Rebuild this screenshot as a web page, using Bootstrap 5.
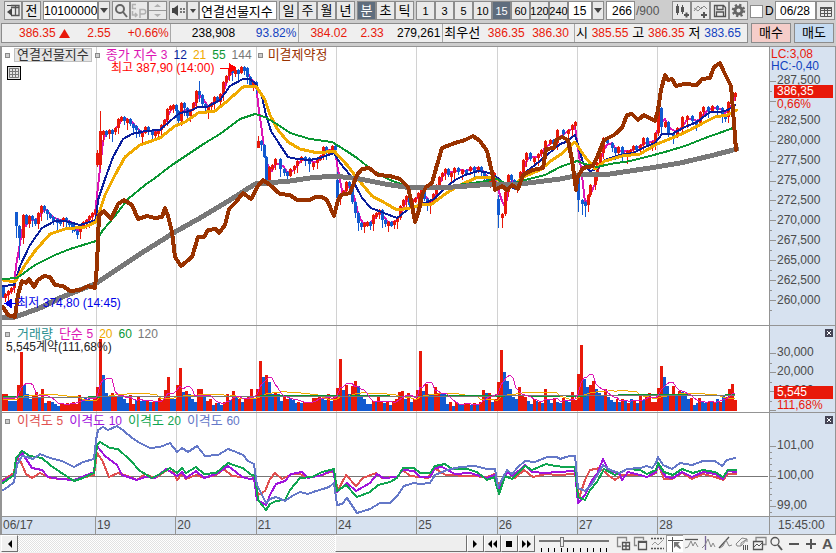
<!DOCTYPE html>
<html lang="ko">
<head>
<meta charset="utf-8">
<meta name="viewport" content="width=device-width, initial-scale=1">
<title>연결선물지수 차트</title>
<link href="https://cdn.jsdelivr.net/npm/bootstrap@5.3.0/dist/css/bootstrap.min.css" rel="stylesheet">
<style>
body{background:#cdcdcd;color:#000;font-family:"Liberation Sans","Noto Sans CJK KR",sans-serif;font-size:12px;line-height:16px}
button,input,select{font:inherit;color:inherit;border-radius:0;margin:0}
/* toolbar */
.tools{height:22px;padding:1px 1px 1px 4px}
.tools>*{height:19px}
.tb{background:#e9e9e9;border:1px solid #8c8c8c;padding:0;width:19px;height:19px;display:flex;align-items:center;justify-content:center;flex:none;white-space:nowrap}
.tb.on{background:#5f6d7d;color:#fff}
.tb.slim{width:12px}
.tb.mid{width:18px}
.tb:disabled{color:#b5b5b5}
.sp{margin-right:2px}
.fld{background:#fff;border:1px solid #8c8c8c;padding:0 2px;height:19px;min-width:0;flex:none}
.w-code{width:55px;padding:0}.w-num{width:24px;padding:0 4px}.w-cnt{width:29px;text-align:right}.w-date{width:41px;padding:0 4px}
.w-name{flex:1 1 77px;font-size:13px;padding:0 1px}
.mins{font-size:11px}
.total{width:37px;padding:2px 0 0 1px;color:#555;flex:none}
.ko{font-size:13px}
.tools .tick-box{appearance:none;width:13px;height:13px;background:#fff;border:1px solid #8c8c8c;align-self:center;flex:none}
.dlab{width:12px;padding:2px 0 0 2px;flex:none}
/* quote line */
.quote{padding:1px 2px 3px 1px;gap:3px}
.cells{border:1px solid #8c8c8c;background:#efefef;height:20px}
.cells>div{display:flex;justify-content:space-between;align-items:center;border-right:1px solid #a8a8a8;white-space:nowrap}
.cells>div:last-child{border-right:0}
.c1{flex:166 1 0;padding:0 1px 0 17px}.c2{flex:116 1 0;padding:0 2px 0 21px}.c3{flex:144 1 0;padding:0 2px 0 11px}.c4{flex:138 1 0;padding:0 5px 0 1px}.c5{flex:183 1 0;padding:0 6px 0 1px}
.up{color:#e8190a}.dn{color:#1242c0}
.deal{width:40px;height:20px;padding:0;border:1px solid #8c8c8c;font-size:13px;line-height:16px}
.buy{background:#f5cdc9}.sell{background:#c6dcf2}
/* chart frame */
.frame{display:grid;grid-template-columns:minmax(0,1fr) 66px;grid-template-rows:minmax(0,279fr) minmax(0,87fr) minmax(0,104fr) 17px;border:1px solid #949494;border-left-width:2px;background:#fff;min-height:0}
.pane{position:relative;border-bottom:1px solid #949494;overflow:hidden;min-height:0}
.pane>svg{position:absolute;inset:0;width:100%;height:100%}
.scale{position:relative;background:#d7e2f0;border-left:1px solid #949494;border-bottom:1px solid #949494;color:#4a4a4a;overflow:hidden;min-height:0}
.scale>svg{position:absolute;left:0;top:0;width:8px;height:100%}
.ladder{display:flex;flex-direction:column;justify-content:space-between;height:100%;padding-left:7px}
.lad-a{padding-top:25px;padding-bottom:17px}.lad-b{padding-top:18px;padding-bottom:14px}.lad-c{padding-top:24px;padding-bottom:3px}
.keys{position:absolute;left:3px;top:1px;display:flex;align-items:center;gap:6px;white-space:nowrap;font-size:13px;line-height:14px}
.keys i{width:5px;height:5px;border:1px solid #8a8a8a;background:#ccc}
.keys i:first-child{margin-right:1px}
.keys b{font-weight:400;font-size:12px}
.keys i+.br{margin-left:-1px}
.chip{border:1px solid #c0c0c0;background:#e6e6e6;padding:0 2px;margin:0 -3px;color:#333;line-height:12px}
.note{position:absolute;white-space:nowrap;line-height:14px}
.n-hi{left:14.2%;top:5%;color:#f00}.n-lo{left:2%;top:89.5%;color:#0000e8}
.n-vol{left:4px;top:14px;color:#222}
.lc{position:absolute;left:1px;top:1px;line-height:12px}
.tag{position:absolute;left:4px;right:2px;background:#e8190a;color:#fff;padding-left:3px;line-height:13px}
.sub{position:absolute;left:4px;right:2px;color:#e8190a;padding-left:3px;line-height:12px}
.t1{top:38px}.s1{top:51px}.t2{top:60px}.s2{top:73px}
.shut{position:absolute;right:2px;top:3px;width:8px;height:8px;padding:0;border:0;background:#445;color:#fff;display:flex}
.gridbtn{position:absolute;left:5px;top:19px;width:14px;height:14px;border:1px solid #000;background:#e2e2e2;padding:1px;display:flex}
.days{background:#d7e2f0;color:#4a4a4a;display:flex;line-height:16px}
.days span{border-left:1px solid #949494;padding-left:1px;flex:80 1 0;min-width:0}
.days span:first-child{border:0;flex-grow:94}.days span:last-child{flex-grow:112}
.clock{background:#d7e2f0;color:#4a4a4a;border-left:1px solid #949494;padding-left:8px;line-height:16px}
.mg{color:#dc14b4}.nv{color:#0a1e9c}.gd{color:#f0aa00}.gr{color:#0a9632}.gy{color:#777}.br{color:#993200}.tl{color:#2a9090}
.rs{color:#e05050}.pu{color:#a014dc}.gn{color:#10a550}.sl{color:#6478c8}
/* bottom strip */
.strip{background:#f1f1f1;height:18px;padding-left:1px}
.sb{width:17px;height:17px;flex:none;padding:0;background:#f0f0f0;border:1px solid;border-color:#fff #707070 #707070 #fff;display:flex;align-items:center;justify-content:center}
.rail{flex:448 1 0;height:17px;background:repeating-conic-gradient(#e2e2e2 0 25%,#fff 0 50%) 0 0/2px 2px;display:flex;justify-content:flex-end}
.thumb{width:29.4%;background:#eee;border:1px solid;border-color:#fff #707070 #707070 #fff}
.zoomer{flex:70 1 0;height:18px;min-width:0;padding:0 3px 0 4px;display:flex;flex-direction:column}
.zoomer input{appearance:none;width:100%;height:13px;background:linear-gradient(#777,#777) 0 5px/100% 2px no-repeat}
.zoomer input::-webkit-slider-thumb{appearance:none;width:4px;height:10px;background:#eee;border:1px solid #777}
.zoomer svg{width:100%;height:4px}
.ib{width:17px;height:17px;flex:none;padding:0;border:0;background:none;display:flex;align-items:center;justify-content:center}
.ib.on{background:#fff;border:1px solid #999;border-right:0;border-bottom:0}
.aa{font-weight:bold;font-size:15px;color:#555}
.ibs{padding:0 0 0 3px}
svg{display:block;flex:none}
.ln polyline{fill:none;stroke-linejoin:round;stroke-linecap:round}
.ic{fill:none;stroke:#555;stroke-width:1.3}
</style>
<script src="https://cdn.jsdelivr.net/npm/bootstrap@5.3.0/dist/js/bootstrap.bundle.min.js"></script>
</head>
<body class="vh-100 d-flex flex-column overflow-hidden">

<header class="tools d-flex align-items-start">
  <button class="tb mid" aria-label="패널"><svg class="ic" width="15" height="15"><path d="M5 2.500h8v10H5M5 4.500h8M9.500 2v10"/><path d="M6 5v8L1 9z" fill="#444" stroke="none"/><path d="M1 2h4v1H1z" fill="#444" stroke="none"/></svg></button>
  <button class="tb ko sp">전</button>
  <input class="fld w-code" aria-label="종목코드" value="10100000">
  <button class="tb slim sp" aria-label="코드 목록"><svg width="8" height="5"><path d="M0 0h8L4 5z" fill="#444"/></svg></button>
  <button class="tb mid" aria-label="검색"><svg width="14" height="14" fill="none" stroke="#666" stroke-width="2"><circle cx="6" cy="5" r="4"/><path d="M9 8l4 5"/></svg></button>
  <button class="tb mid" disabled aria-label="CP"><svg width="16" height="16" fill="none" stroke="#b0b0b0" stroke-width="1.500"><path d="M5 1.500H1.500v4H5M1.500 8v4H5M4 10l2 2-2 2M9 15V6.500h3.500a2 2 0 0 1 0 4.500H9"/></svg></button>
  <button class="tb sp" disabled aria-label="증감"><svg width="17" height="17"><path d="M0 8h17v1H0z" fill="#999"/><path d="M5 5h7L8.500 2zM5 12h7l-3.500 3z" fill="#b0b0b0"/></svg></button>
  <button class="tb mid" aria-label="소리"><svg width="15" height="13"><path d="M1 4h2l4-3v11L3 9H1z" fill="#444"/><path d="M9 4h2v2H9zM12 4h2v2h-2zM9 7h2v2H9zM12 7h2v2h-2z" fill="#777"/></svg></button>
  <button class="tb slim" aria-label="소리 목록"><svg width="6" height="4"><path d="M0 0h6L3 4z" fill="#444"/></svg></button>
  <input class="fld w-name sp" aria-label="종목명" value="연결선물지수">
  <div class="d-flex ko"><button class="tb">일</button><button class="tb">주</button><button class="tb">월</button><button class="tb sp">년</button><button class="tb on">분</button><button class="tb">초</button><button class="tb sp">틱</button></div>
  <div class="d-flex mins"><button class="tb">1</button><button class="tb">3</button><button class="tb">5</button><button class="tb">10</button><button class="tb on">15</button><button class="tb">60</button><button class="tb">120</button><button class="tb">240</button></div>
  <input class="fld w-num" aria-label="분 간격" value="15">
  <button class="tb slim sp" aria-label="간격 목록"><svg width="8" height="5"><path d="M0 0h8L4 5z" fill="#444"/></svg></button>
  <input class="fld w-cnt" aria-label="봉 수" value="266"><span class="total">/900</span>
  <button class="tb" aria-label="지표 추가"><svg width="16" height="16"><path d="M2 3h3v7H2zM3 1h1v11H3zM7 4h3v5H7zM8 2h1v9H8zM10 11h5v2h-5zM11.500 9.500h2v5h-2z" fill="#555"/></svg></button>
  <button class="tb" aria-label="선 추가"><svg width="16" height="16"><path d="M1 8l4-5 3 3 3-3 3 3M1 5l4 3 4-4" fill="none" stroke="#888"/><path d="M8 11h6v2H8zM10 9h2v6h-2z" fill="#555"/></svg></button>
  <button class="tb" aria-label="저장"><svg class="ic" width="16" height="16"><path d="M2.500 2.500h9l2 2v9h-11zM5 2.500v4h6v-4M4.500 13V9h7v4"/></svg></button>
  <button class="tb sp" aria-label="설정"><svg width="15" height="15" fill="none" stroke="#666"><circle cx="7.500" cy="7.500" r="3.500" stroke-width="3"/><circle cx="7.500" cy="7.500" r="5.500" stroke-width="2.500" stroke-dasharray="2.200 2.120"/></svg></button>
  <input class="tick-box" type="checkbox" id="dchk"><label for="dchk" class="dlab">D</label>
  <input class="fld w-date" aria-label="날짜" value="06/28">
  <button class="tb" aria-label="달력"><svg width="12" height="12" fill="none" stroke="#555"><path d="M.5 2.500h11v9H.5zM.5 5.500h11M.5 8.500h11M4.500 3v8M7.500 3v8"/><path d="M0 2h12v2H0z" fill="#555" stroke="none"/></svg></button>
</header>

<section class="quote d-flex">
  <div class="cells d-flex flex-grow-1">
    <div class="c1"><span class="up">386.35 <svg class="d-inline" width="11" height="9"><path d="M5.500 0L11 9H0z" fill="#e8190a"/></svg></span><span class="up">2.55</span><span class="up">+0.66%</span></div>
    <div class="c2"><span>238,908</span><span class="dn">93.82%</span></div>
    <div class="c3"><span class="up">384.02</span><span class="up">2.33</span><span>279,261</span></div>
    <div class="c4"><span class="ko">최우선</span><span class="up">386.35</span><span class="up">386.30</span></div>
    <div class="c5"><span class="ko">시</span><span class="up">385.55</span><span class="ko">고</span><span class="up">386.35</span><span class="ko">저</span><span class="dn">383.65</span></div>
  </div>
  <button class="deal buy">매수</button>
  <button class="deal sell">매도</button>
</section>

<main class="frame flex-grow-1">
  <div class="pane">
    <svg class="ln" viewBox="2 47 767 278" preserveAspectRatio="none" shape-rendering="crispEdges">
      <path stroke="#d2d2d2" d="M96.500 47v278M176.500 47v278M256.500 47v278M336.500 47v278M416.500 47v278M497.500 47v278M577.500 47v278M657.500 47v278"/>
      <polyline id="ma3" stroke="#dc14b4" stroke-width="2"/>
      <g id="candles"></g>
      <polyline stroke="#0a1e9c" stroke-width="2" points="3,286 14,285 20,266 30,245 42,228 55,221 65,221 80,225 90,222 96,220 98,200 105,179 113,157 123,139 132,134 145,131 160,130 170,121 180,113 190,111 198,107 207,107 220,100 230,86 243,79 250,79 256,84 262,97 266,115 271,131 280,145 288,157 297,159 310,160 320,158 334,153 340,163 350,175 362,198 371,208 384,213 397,218 410,208 425,203 434,199 443,190 455,180 465,175 478,171 490,173 498,178 505,186 515,188 523,174 535,165 547,155 560,144 566,142 575,135 578,145 583,163 590,171 597,169 605,160 620,155 633,153 645,147 655,143 662,134 672,134 685,127 697,122 710,112 720,112 728,110 735,105"/>
      <polyline stroke="#f0aa00" stroke-width="3" points="3,280 15,282 25,265 35,251 50,234 65,229 85,227 96,222 100,210 105,195 115,175 125,157 140,145 160,138 175,126 185,122 198,113 215,111 225,103 243,87 256,86 265,100 270,115 278,130 288,142 300,149 318,153 334,151 347,165 357,178 372,196 385,203 397,210 410,208 425,204 432,204 445,194 460,185 478,177 492,177 500,181 512,187 523,177 540,170 552,160 560,155 575,142 585,157 595,169 605,161 622,156 640,154 657,144 677,136 690,130 705,122 715,117 727,115 737,110"/>
      <polyline stroke="#0a9632" stroke-width="2" points="3,279 17,278 35,265 55,255 70,249 96,241 103,230 115,216 128,199 145,185 155,178 172,165 190,153 205,143 220,134 240,119 255,114 265,117 280,126 290,133 310,139 332,142 345,150 357,158 372,170 390,180 410,187 430,187 450,186 480,182 497,179 508,185 525,180 545,175 560,167 577,161 585,164 597,167 610,164 630,161 650,156 665,152 685,146 705,138 722,132 733,128"/>
      <polyline stroke="#787878" stroke-width="5" points="2,318 15,317 40,308 60,298 95,284 110,274 140,254 175,232 200,218 230,200 255,184 290,181 310,178 335,176 360,179 385,184 405,187 440,188 480,185 520,184 560,179 580,175 610,174 650,168 680,163 710,156 737,149"/>
      <polyline stroke="#993200" stroke-width="4" points="3,307 8,315 15,317 18,295 22,281 26,283 29,279 34,287 38,280 44,276 50,277 55,285 63,286 70,291 80,290 88,286 95,288 97,265 99,215 104,211 111,219 118,204 124,200 132,205 138,219 147,216 155,218 162,217 165,208 168,216 172,232 175,257 181,266 192,257 198,237 204,237 208,230 216,229 219,233 225,225 229,209 236,202 243,193 251,199 258,186 263,180 270,185 280,194 290,195 297,200 310,200 315,197 322,197 327,200 334,216 338,200 341,195 350,193 357,175 362,169 369,168 378,175 390,176 400,179 408,187 412,205 415,222 419,210 422,195 426,187 432,183 437,165 442,148 455,143 465,140 473,136 480,141 487,151 492,172 495,190 502,186 507,190 512,185 518,189 523,175 532,170 543,168 546,149 554,148 556,140 562,137 568,140 572,160 576,190 577,178 583,168 593,166 598,155 604,140 614,135 622,128 627,115 632,114 638,120 644,115 655,121 658,110 661,90 665,75 668,80 672,79 676,86 684,84 697,85 702,79 710,78 714,67 720,63 724,72 731,86 733,110 736,150"/>
      <path d="M220 68h10v1h-10zM229 63l8 5-8 6z" fill="#f00"/>
      <path d="M10 303h6v1h-6zM4 303.500l8-5v10z" fill="#0000e8"/>
    </svg>
    <div class="keys"><i></i><span class="chip">연결선물지수</span><i></i><span class="mg">종가 지수 <b>3</b></span><b class="nv">12</b><b class="gd">21</b><b class="gr">55</b><b class="gy">144</b><i></i><span class="br">미결제약정</span></div>
    <button class="gridbtn" aria-label="표"><svg width="10" height="10" fill="none" stroke="#777"><path d="M.5.5h9v9h-9zM.5 3.500h9M.5 6.500h9M3.500 0v10M6.500 0v10"/></svg></button>
    <span class="note n-hi">최고 387,90 (14:00)</span>
    <span class="note n-lo">최저 374,80 (14:45)</span>
  </div>
  <div class="scale">
    <svg viewBox="0 47 8 278" preserveAspectRatio="none" id="tA" stroke="#949494" shape-rendering="crispEdges"></svg>
    <div class="ladder lad-a"><span>287,500</span><span>&nbsp;</span><span>282,500</span><span>280,000</span><span>277,500</span><span>275,000</span><span>272,500</span><span>270,000</span><span>267,500</span><span>265,000</span><span>262,500</span><span>260,000</span></div>
    <div class="lc"><div class="up">LC:3,08</div><div class="dn">HC:-0,40</div></div>
    <div class="tag t1">386,35</div><div class="sub s1">0,66%</div>
  </div>

  <div class="pane">
    <svg class="ln" viewBox="2 326 767 86" preserveAspectRatio="none" shape-rendering="crispEdges">
      <path stroke="#d2d2d2" d="M96.500 326v86M176.500 326v86M256.500 326v86M336.500 326v86M416.500 326v86M497.500 326v86M577.500 326v86M657.500 326v86"/>
      <g id="vols"></g>
      <polyline id="vm20" stroke="#f0aa00"/>
      <path stroke="#0a9632" stroke-width="2" d="M3 397h20M88 397h12M260 396h80M350 396h40M445 396h60M530 396h30M566 396h20M618 395h70M725 395h10"/>
      <path stroke="#777" d="M3 397.500h93M96 396.500h400M496 395.500h239"/>
      <polyline id="vm5" stroke="#dc14b4"/>
    </svg>
    <div class="keys"><i></i><span class="tl">거래량</span><span class="mg">단순 <b>5</b></span><b class="gd">20</b><b class="gr">60</b><b class="gy">120</b></div>
    <span class="note n-vol">5,545계약(111,68%)</span>
  </div>
  <div class="scale">
    <svg viewBox="0 326 8 86" preserveAspectRatio="none" id="tB" stroke="#949494" shape-rendering="crispEdges"></svg>
    <div class="ladder lad-b"><span>30,000</span><span>20,000</span><span>10,000</span></div>
    <button class="shut" aria-label="닫기"><svg width="8" height="8" stroke="#fff"><path d="M2 2l4 4M6 2L2 6"/></svg></button>
    <div class="tag t2">5,545</div><div class="sub s2">111,68%</div>
  </div>

  <div class="pane">
    <svg class="ln" viewBox="2 413 767 103" preserveAspectRatio="none" shape-rendering="crispEdges" stroke-width="2">
      <path stroke="#d2d2d2" stroke-width="1" d="M96.500 413v103M176.500 413v103M256.500 413v103M336.500 413v103M416.500 413v103M497.500 413v103M577.500 413v103M657.500 413v103"/>
      <path stroke="#777" stroke-width="1" d="M2 476.500h766"/>
      <polyline stroke="#e05050" points="3,480 14,473 16,458 20,460 26,474 32,478 40,473 50,478 74,480 94,475 97,453 102,460 109,477 118,473 130,477 137,480 145,474 155,478 167,470 174,473 177,480 182,474 186,479 196,475 204,478 216,475 224,469 232,476 242,477 250,479 255,478 258,495 265,491 270,479 275,473 282,479 292,474 300,474 308,478 322,475 333,471 338,490 346,475 356,486 363,478 376,473 382,478 397,477 403,470 410,476 420,477 428,478 434,468 446,475 470,476 487,477 495,474 499,487 508,471 515,478 524,470 533,477 546,474 557,475 575,474 579,498 585,480 590,470 600,468 608,475 615,480 622,475 640,475 647,477 656,473 658,464 664,479 672,479 682,473 692,479 703,474 715,477 723,480 728,474 736,474"/>
      <polyline stroke="#a014dc" points="3,481 14,475 17,458 22,453 32,468 42,470 48,477 60,479 74,480 94,472 97,446 105,456 117,465 122,475 137,480 145,477 155,478 166,469 177,476 182,472 186,478 196,471 204,478 216,474 228,466 236,472 242,477 250,479 254,478 257,500 266,505 270,495 276,484 285,481 291,474 302,472 308,478 322,475 333,470 337,492 347,483 356,491 370,483 377,474 383,478 397,477 403,470 414,471 420,477 430,477 435,468 442,467 455,474 470,473 487,478 494,475 499,490 507,472 513,476 525,465 532,472 546,473 557,472 575,471 578,503 585,495 592,480 597,474 603,459 608,469 620,475 622,480 628,472 640,475 647,477 656,472 658,465 666,477 673,478 682,472 692,477 703,472 715,474 723,479 728,471 736,472"/>
      <polyline stroke="#10a550" points="3,483 14,475 16,458 22,451 30,456 42,458 50,465 60,472 74,481 83,478 94,473 97,445 100,442 110,448 118,449 130,460 140,471 152,478 160,474 170,468 177,473 182,468 186,473 196,467 204,474 216,473 228,463 236,466 243,468 250,474 255,476 258,500 266,510 270,504 276,501 285,500 290,490 300,478 312,477 322,472 334,469 337,491 346,485 357,497 370,492 378,485 390,482 397,478 403,468 414,468 420,473 430,473 435,466 445,464 452,469 467,469 477,472 487,480 494,477 499,494 505,476 512,479 525,466 532,470 546,464 555,466 565,467 575,467 578,497 585,500 590,490 597,482 604,469 615,475 627,469 640,470 647,474 656,470 658,463 664,472 673,475 682,469 693,473 703,470 715,472 723,477 728,470 736,470"/>
      <polyline stroke="#6478c8" points="3,490 8,487 14,482 17,465 22,456 27,457 33,459 40,454 50,458 62,461 74,467 83,462 94,459 96,440 98,430 103,427 108,430 117,426 124,431 132,438 140,443 150,448 160,447 170,443 177,452 182,448 188,452 197,446 205,456 218,455 228,449 236,452 243,455 248,461 254,464 257,485 262,495 266,503 270,499 276,497 285,501 292,496 300,492 308,494 316,491 323,489 329,487 334,483 337,505 342,504 347,498 357,513 370,509 380,503 390,503 397,496 404,486 414,483 420,484 430,483 435,475 447,470 460,467 475,466 487,469 495,469 498,487 507,470 512,474 518,467 525,461 535,462 547,457 557,457 560,459 566,457 570,456 575,456 578,488 585,491 592,484 598,474 603,465 610,470 620,473 627,469 640,468 647,466 652,468 656,463 658,457 663,465 672,469 680,463 692,465 703,461 715,461 722,466 727,460 735,458"/>
    </svg>
    <div class="keys"><i></i><span class="rs">이격도 <b>5</b></span><span class="pu">이격도 <b>10</b></span><span class="gn">이격도 <b>20</b></span><span class="sl">이격도 <b>60</b></span></div>
  </div>
  <div class="scale">
    <svg viewBox="0 413 8 103" preserveAspectRatio="none" id="tC" stroke="#949494" shape-rendering="crispEdges"></svg>
    <div class="ladder lad-c"><span>101,00</span><span>100,00</span><span>99,00</span></div>
    <button class="shut" aria-label="닫기"><svg width="8" height="8" stroke="#fff"><path d="M2 2l4 4M6 2L2 6"/></svg></button>
  </div>

  <div class="days"><span>06/17</span><span>19</span><span>20</span><span>21</span><span>24</span><span>25</span><span>26</span><span>27</span><span>28</span></div>
  <div class="clock">15:45:00</div>
</main>

<footer class="strip d-flex">
  <button class="sb" aria-label="왼쪽"><svg width="4" height="8"><path d="M4 0v8L0 4z"/></svg></button>
  <div class="rail"><div class="thumb"></div></div>
  <button class="sb" aria-label="오른쪽"><svg width="4" height="8"><path d="M0 0v8l4-4z"/></svg></button>
  <button class="sb" aria-label="뒤로"><svg width="9" height="8"><path d="M4 0v8L0 4zM9 0v8L5 4z"/></svg></button>
  <button class="sb" aria-label="정지"><svg width="6" height="6"><path d="M0 0h6v6H0z"/></svg></button>
  <button class="sb" aria-label="앞으로"><svg width="9" height="8"><path d="M0 0v8l4-4zM5 0v8l4-4z"/></svg></button>
  <div class="zoomer"><input type="range" aria-label="확대" min="0" max="100" value="32"><svg viewBox="0 0 70 4" preserveAspectRatio="none" stroke="#000" shape-rendering="crispEdges"><path d="M2.500 0v4M9.500 0v4M15.500 0v4M22.500 0v4M28.500 0v4M34.500 0v4M41.500 0v4M48.500 0v4M54.500 0v4M61.500 0v4M67.500 0v4"/></svg></div>
  <div class="ibs d-flex">
    <button class="ib" aria-label="창 추가"><svg class="ic" width="15" height="15"><path d="M5 10.500H1.500v-9h9V5" stroke="#888"/><path d="M6.500 6.500h7v7h-7zM10 6.500v7M6.500 10h7"/></svg></button>
    <button class="ib" aria-label="창 겹침"><svg class="ic" width="15" height="15"><path d="M4 9.500H1.500v-8h9V4" stroke="#888"/><path d="M5.500 5.500h8v8h-8z"/><path d="M5 5h9v2H5z" fill="#555" stroke="none"/></svg></button>
    <button class="ib" aria-label="영역"><svg class="ic" width="15" height="15"><path d="M1 2.500h13M1 12.500h13" stroke-dasharray="2 1"/><path d="M2 9l3-3 3 3 5-5" stroke="#999" stroke-width="1"/></svg></button>
    <button class="ib on" aria-label="선택"><svg class="ic" width="15" height="15"><path d="M0 3.500h15M4.500 0v15" stroke-width="1"/><path d="M6 5h6l-2 2 3 4-1 1-4-3-2 2z" fill="#777" stroke="none"/></svg></button>
    <button class="ib" aria-label="수평선"><svg class="ic" width="15" height="15"><path d="M1 3.500h13"/><path d="M1 12l3-1 3-6 2 5 2-4 3 5" stroke="#888" stroke-width="1"/></svg></button>
    <button class="ib" aria-label="수직선"><svg class="ic" width="15" height="15"><path d="M4.500 0v14" stroke="#769"/><path d="M1 12l3-3 3-6 3 8 2-4 2 4" stroke="#888" stroke-width="1"/></svg></button>
    <button class="ib" aria-label="추세선"><svg class="ic" width="15" height="15"><path d="M1 12L11 1"/><path d="M2 12l3-2 3-6 3 6 3-1" stroke="#888" stroke-width="1"/></svg></button>
    <button class="ib" aria-label="지우개"><svg class="ic" width="15" height="15"><path d="M1 8l6-6 5 1-6 7H2zM6 10V7l6-4v3" stroke="#888" stroke-width="1"/><path d="M8.500 9v5M10.500 9v5M12.500 9v5" stroke-width="1"/></svg></button>
    <button class="ib" aria-label="복사"><svg class="ic" width="15" height="15"><path d="M4 5V1.500h10v7h-3" stroke="#888"/><path d="M1.500 5.500h9v8h-9z"/><path d="M2 11l3-3 2 2 3-3" stroke-width="1"/></svg></button>
    <button class="ib" aria-label="돋보기"><svg class="ic" width="15" height="15"><circle cx="6" cy="5.500" r="4"/><path d="M9 9l4 5" stroke-width="2"/></svg></button>
    <button class="ib" aria-label="축소"><svg width="12" height="12"><path d="M1 5h10v2H1z" fill="#555"/></svg></button>
    <button class="ib" aria-label="확대"><svg width="12" height="12"><path d="M1 5h10v2H1zM5 1h2v10H5z" fill="#555"/></svg></button>
    <button class="ib aa" aria-label="글자">A</button>
  </div>
</footer>

<script>
// closing level of each bar as x,y in plot units
const price="3,297 5,294 8,291 11,288 14,284 16,226 19,238 23,215 26,224 29,216 32,219 35,224 38,213 41,206 44,210 47,214 50,217 53,219 57,220 60,222 63,218 66,221 69,223 72,226 74,231 77,232 80,225 83,222 86,220 89,216 92,213 95,210 97,165 100,131 103,131 106,134 109,130 112,131 115,128 118,119 121,117 124,120 127,119 130,124 133,126 136,130 139,133 142,133 145,127 148,131 152,134 155,132 158,130 161,125 164,120 167,109 170,106 173,105 176,111 178,121 181,103 184,108 187,116 190,110 193,103 196,91 199,95 202,104 205,107 208,107 211,103 214,97 217,102 220,94 223,82 226,76 229,69 232,73 235,70 238,73 241,67 244,68 247,77 250,85 253,82 256,85 258,141 261,145 264,157 266,180 269,167 272,165 275,159 280,169 284,172 287,176 290,169 294,166 297,161 301,157 305,158 309,164 313,163 317,159 320,156 323,147 326,153 329,150 332,146 335,149 337,198 340,195 343,191 346,182 349,186 352,202 355,213 358,223 361,225 364,223 367,222 370,224 373,215 376,213 379,210 382,220 385,224 388,222 391,224 394,221 397,218 400,206 403,200 406,196 409,205 412,200 415,198 418,193 421,190 424,199 427,206 430,202 433,194 436,185 439,177 442,173 445,169 448,175 451,173 454,168 458,171 462,170 466,171 470,167 474,170 478,167 481,172 484,176 487,180 490,178 494,173 498,215 502,214 505,192 508,175 511,180 514,187 517,183 520,172 523,160 526,153 530,159 534,158 538,154 541,150 545,141 550,140 553,143 557,130 563,133 568,130 572,125 575,122 578,200 582,202 585,205 588,195 590,185 595,173 597,163 600,153 603,138 607,143 612,148 615,153 618,147 622,156 627,151 630,150 633,146 636,148 640,145 643,138 647,145 652,142 655,133 658,108 661,127 665,122 668,133 673,136 677,128 682,117 687,116 692,121 696,125 700,112 703,107 708,111 712,106 717,108 722,115 725,117 728,102 732,95 735,93".split(" ").map(p=>p.split(",").map(Number));
// bars that open away from the previous close: x -> [open, high, low]
const gaps={16:[212,212,238],97:[153,150,167],258:[148,136,148],337:[180,172,198],498:[199,195,228],578:[177,172,212]};
const highs={100:111,199:81,658:97},lows={19:260,337:205,502:228,582:215,585:217};
let out="";
price.forEach(([x,y],i)=>{
  const g=gaps[x], o=g?g[0]:i?price[i-1][1]:287;
  const rise=x===97||x===258||(!g&&y<=o), top=Math.min(o,y), h=Math.max(4,Math.abs(o-y));
  const hi=highs[x]||(g?Math.min(g[1],top):top-1-i*7%7), lo=lows[x]||(g?Math.max(g[2],top+h):top+h+1+i*11%8);
  const c=rise?"#e8190a":"#125ad0";
  out+=`<path fill="${c}" d="M${x-1} ${top}h3v${h}h-3zM${x} ${hi}h1v${lo-hi}h-1z"/>`;
});
candles.innerHTML=out;
ma3.setAttribute("points",price.map(([x],i)=>{const s=price.slice(Math.max(0,i-2),i+1);return x+","+Math.round(s.reduce((a,b)=>a+b[1],0)/s.length)}).join(" "));

// volume bars per trading day: start, width, colour+height list
const days=[
[2,94,"r17 r17 b10 b10 b10 r26 r59 b26 b17 b12 r15 r19 b14 r22 b8 r10 b9 b7 b5 r7 r7 r8 r7 r9 r7 r16 b12 b13 b12 b10 r12"],
[96,80,"r24 r72 b36 b18 b15 r18 r15 b15 b17 b12 b8 r16 r7 b11 r14 b10 b10 r10 b9 r9 b9 r13 r11 r21 r34 b12 b12"],
[176,80,"r26 r43 b19 r20 b17 b12 b9 r22 r22 b14 r10 r12 b6 r8 b8 b6 r9 r17 b11 r20 b14 r12 b9 r12 r15 r22 b12"],
[256,80,"r22 r50 b34 r36 b29 b17 r18 b17 b10 r14 r12 b13 b11 b8 r9 b8 r9 r8 r9 r13 r13 r16 b12 b11 r17 b10 r15"],
[336,80,"r23 r52 b21 r26 b17 r25 r30 b25 b15 b12 b7 b7 r10 b10 r14 r10 b8 r10 b6 r10 r12 r19 r20 b12 r18 b9 r12"],
[416,81,"r21 r60 b20 r27 b17 b16 r24 r18 b17 b17 b7 r9 b5 r9 b7 b6 r8 r8 b6 r8 b6 r9 r21 b18 r18 b9 r12"],
[497,80,"r29 r61 b39 b30 b22 b14 b12 r24 r15 r14 b10 b7 r12 b10 r9 b8 r22 b11 b8 r13 b9 b8 r13 b10 b9 r19 r11"],
[577,80,"r37 r66 b32 b24 r26 r30 b22 b18 b16 r22 b14 b11 b9 r12 b9 r12 b11 r8 b12 r10 b8 r15 b11 r16 r18 r9 r9"],
[657,80,"r23 r45 b34 b25 r17 r25 b17 r20 b19 b16 b12 r13 b6 b8 r13 b9 b8 r9 b9 r9 b12 r9 b15 r14 r22 r27 r11"]];
let bars="",all=[];
days.forEach(([s,w,l])=>{const a=l.split(" ");a.forEach((b,i)=>{
  const x=Math.round(s+i*w/a.length),x2=Math.round(s+(i+1)*w/a.length),h=+b.slice(1);
  all.push([x+1,h]);
  bars+=`<path fill="${b[0]==="r"?"#e8190a":"#125ad0"}" d="M${x} ${411-h}h${x2-x}v${h}h-${x2-x}z"/>`;
})});
vols.innerHTML=bars;
const avg=(n,seed)=>{const q=Array(n).fill(seed);return all.map(([x,h])=>{q.push(h);q.shift();return x+","+(411-Math.round(q.reduce((a,b)=>a+b,0)/n))}).join(" ")};
vm5.setAttribute("points",avg(5,11));
vm20.setAttribute("points",avg(20,11));

// scale ticks: long at each label, short between
const ticks=(el,y0,step,sub,n)=>{let d="";for(let i=0;i<n;i++){const y=Math.round(y0+i*step/sub)+.5;d+=`M0 ${y}h${i%sub?2:6}`}el.innerHTML=`<path d="${d}"/>`};
ticks(tA,81,19.9,2,24);
ticks(tB,353,19,2,7);
ticks(tC,446,30,5,12);
</script>
</body>
</html>
